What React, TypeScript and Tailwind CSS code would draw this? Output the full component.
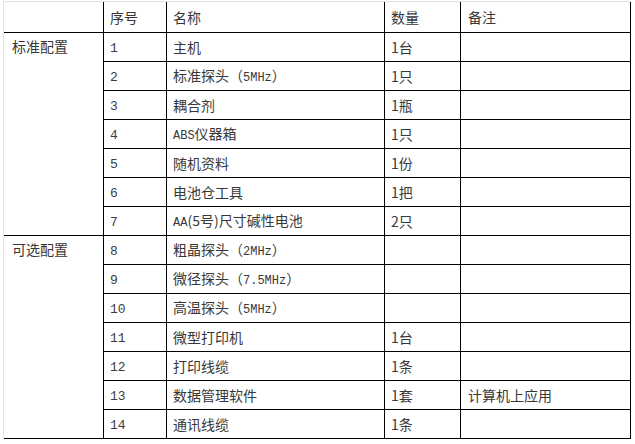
import React from "react"

const cjk = { fontFamily: '"Noto Sans CJK SC", "Noto Sans", sans-serif' }
const mono = { fontFamily: '"Liberation Mono", "Noto Sans CJK SC", monospace' }

type Row = { no: number; name: React.ReactNode; qty?: string; note?: string }

const L = ({ children }: { children: React.ReactNode }) => (
  <span className="text-[12px]" style={mono}>{children}</span>
)

const standard: Row[] = [
  { no: 1, name: "主机", qty: "1台" },
  { no: 2, name: <>标准探头（<L>5MHz</L>）</>, qty: "1只" },
  { no: 3, name: "耦合剂", qty: "1瓶" },
  { no: 4, name: <><L>ABS</L>仪器箱</>, qty: "1只" },
  { no: 5, name: "随机资料", qty: "1份" },
  { no: 6, name: "电池仓工具", qty: "1把" },
  { no: 7, name: <><L>AA</L>(5号)尺寸碱性电池</>, qty: "2只" },
]

const optional: Row[] = [
  { no: 8, name: <>粗晶探头（<L>2MHz</L>）</> },
  { no: 9, name: <>微径探头（<L>7.5MHz</L>）</> },
  { no: 10, name: <>高温探头（<L>5MHz</L>）</> },
  { no: 11, name: "微型打印机", qty: "1台" },
  { no: 12, name: "打印线缆", qty: "1条" },
  { no: 13, name: "数据管理软件", qty: "1套", note: "计算机上应用" },
  { no: 14, name: "通讯线缆", qty: "1条" },
]

const cell = "border-r border-b border-black align-middle p-0 h-[29px]"

function Group({ label, rows }: { label: string; rows: Row[] }) {
  return (
    <>
      {rows.map((r, i) => (
        <tr key={r.no}>
          {i === 0 && (
            <td rowSpan={rows.length} className="border-r border-b border-black align-top p-0 pl-[8px] pt-[6px]">
              {label}
            </td>
          )}
          <td className={`${cell} pl-[6px]`}>
            <span className="text-[13px] text-[#3c3c3c]" style={mono}>{r.no}</span>
          </td>
          <td className={`${cell} pl-[6px]`}>{r.name}</td>
          <td className={`${cell} pl-[6px]`}>{r.qty}</td>
          <td className={`${cell} pl-[7px]`}>{r.note}</td>
        </tr>
      ))}
    </>
  )
}

export default function App() {
  return (
    <div className="w-[635px] h-[444px] bg-white pt-[1px] pl-[3px]" style={cjk}>
      <div className="w-[628px] border-t border-l border-[#e4e4e4]">
        <table className="w-[627px] table-fixed border-separate border-spacing-0 text-[14px] leading-none text-[#383838]">
          <colgroup>
            <col className="w-[100px]" />
            <col className="w-[63px]" />
            <col className="w-[218px]" />
            <col className="w-[76px]" />
            <col className="w-[170px]" />
          </colgroup>
          <thead>
            <tr>
              <td className="border-r border-b border-black p-0 h-[31px]"></td>
              <td className="border-r border-b border-black p-0 pl-[6px] h-[31px] align-middle">序号</td>
              <td className="border-r border-b border-black p-0 pl-[6px] h-[31px] align-middle">名称</td>
              <td className="border-r border-b border-black p-0 pl-[6px] h-[31px] align-middle">数量</td>
              <td className="border-r border-b border-black p-0 pl-[7px] h-[31px] align-middle">备注</td>
            </tr>
          </thead>
          <tbody>
            <Group label="标准配置" rows={standard} />
            <Group label="可选配置" rows={optional} />
          </tbody>
        </table>
      </div>
    </div>
  )
}
